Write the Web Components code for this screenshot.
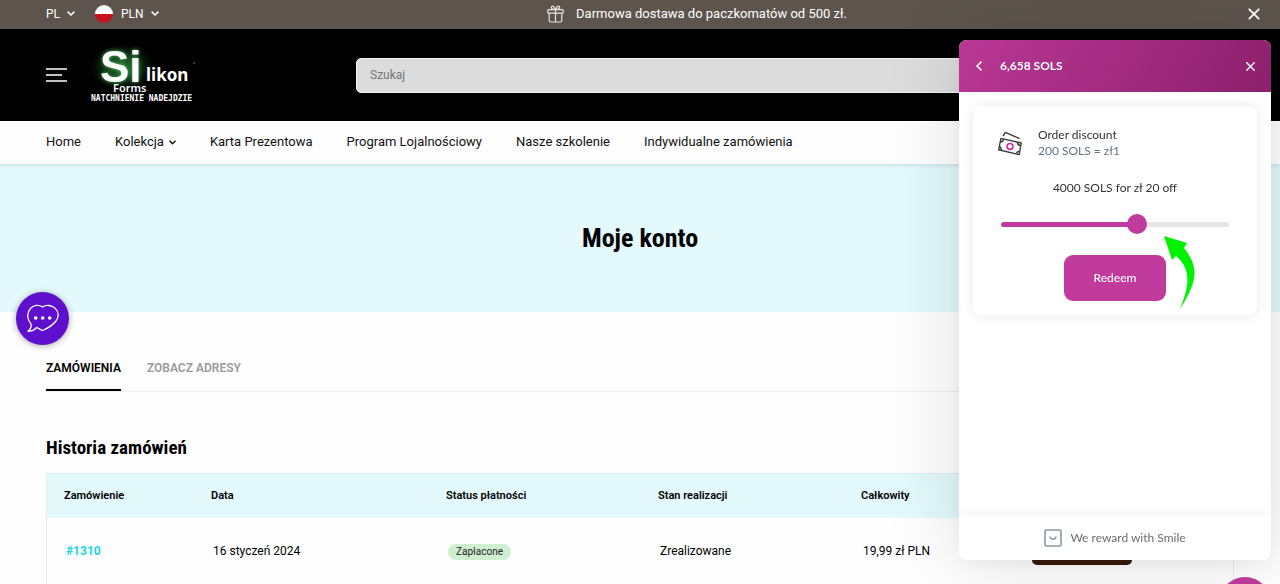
<!DOCTYPE html>
<html lang="pl">
<head>
<meta charset="utf-8">
<meta name="viewport" content="width=device-width, initial-scale=1">
<title>Moje konto – Silikon Forms</title>
<style>
  html { scrollbar-width: none; }
  body {
    margin: 0;
    background: #fefefe;
    color: #000;
    font: 13px/20px Roboto, "Liberation Sans", sans-serif;
    --tint: #e3f9fc;
    --brand: #c13b9c;
    --gutter: 46px;
    --condensed: "Roboto Condensed", "Open Sans Condensed", Roboto, sans-serif;
  }
</style>
</head>
<body>

<shop-page></shop-page>

<template id="t-page">
  <style>
    :host { display: block; }
  </style>
  <announcement-bar>Darmowa dostawa do paczkomatów od 500 zł.</announcement-bar>
  <shop-header></shop-header>
  <shop-nav></shop-nav>
  <page-hero>Moje konto</page-hero>
  <account-tabs></account-tabs>
  <order-history></order-history>
  <chat-button></chat-button>
  <reward-launcher></reward-launcher>
  <reward-panel></reward-panel>
</template>

<template id="t-announcement">
  <style>
    :host {
      display: grid;
      grid-template-columns: 1fr auto 1fr;
      align-items: center;
      height: 29px;
      padding: 0 20px 2px var(--gutter);
      background: #5c544d;
      color: #fff;
      box-sizing: border-box;
      font-size: 12px;
    }
    .left { display: flex; gap: 20px; }
    .msg { display: flex; align-items: center; gap: 12px; margin-left: 88px; font-size: 13px; }
    button {
      display: flex; align-items: center; gap: 7px;
      border: 0; padding: 0; background: none; color: inherit; font: inherit; cursor: pointer;
    }
    .close { justify-self: end; }
    .flag { width: 18px; height: 18px; margin-right: 1px; border-radius: 50%; background: linear-gradient(#fff 50%, #c4161c 50%); }
  </style>
  <div class="left">
    <button>PL <svg width="8" height="5" viewBox="0 0 8 5" fill="none" stroke="#fff" stroke-width="1.5"><path d="M.6.6 4 4 7.4.6"/></svg></button>
    <button><span class="flag"></span>PLN <svg width="8" height="5" viewBox="0 0 8 5" fill="none" stroke="#fff" stroke-width="1.5"><path d="M.6.6 4 4 7.4.6"/></svg></button>
  </div>
  <div class="msg">
    <svg width="17" height="18" viewBox="0 0 17 18" fill="none" stroke="#e4e1de" stroke-width="1.2" stroke-linejoin="round">
      <rect x=".8" y="4.6" width="15.4" height="3.6" rx=".8"/>
      <path d="M2.2 8.2v7.4q0 1.4 1.4 1.4h9.8q1.4 0 1.4-1.4V8.2M8.500 4.600V17M8.500 4.400C7 .2 3.600.4 4.600 3.200q.4 1 3.900 1.200ZM8.500 4.400c1.500-4.200 4.900-4 3.900-1.200q-.4 1-3.900 1.200Z"/>
    </svg>
    <slot></slot>
  </div>
  <button class="close" aria-label="Zamknij"><svg width="12" height="12" viewBox="0 0 12 12" stroke="#fff" stroke-width="1.8" stroke-linecap="round"><path d="m1.300 1.300 9.400 9.400M10.700 1.300l-9.400 9.400"/></svg></button>
</template>

<template id="t-header">
  <style>
    :host {
      display: flex; align-items: center;
      height: 92px; box-sizing: border-box;
      padding: 0 140px 0 var(--gutter);
      background: #000;
    }
    button { border: 0; padding: 0; background: none; display: flex; cursor: pointer; }
    a { display: block; margin: 0 158px 0 19px; }
    svg { display: block; }
    label { flex: 1; display: flex; }
    input {
      flex: 1; min-width: 0; height: 35px; box-sizing: border-box;
      border: 1px solid #f2f2f2; border-radius: 5px;
      padding: 0 13px; background: #dcdcdc; color: #333;
      font: 12px/20px Roboto, sans-serif;
    }
    input::placeholder { color: #757575; opacity: 1; }
  </style>
  <button aria-label="Menu"><svg width="21" height="14" viewBox="0 0 21 14" stroke="#fff" stroke-width="1.300"><path d="M0 1h21M0 7h16M0 13h21"/></svg></button>
  <a href="#" aria-label="Silikon Forms">
    <svg width="112" height="80" viewBox="0 -10 112 80">
      <defs>
        <radialGradient id="halo"><stop offset="0" stop-color="#2c7a35"/><stop offset=".5" stop-color="#123a17" stop-opacity=".8"/><stop offset="1" stop-color="#000" stop-opacity="0"/></radialGradient>
        <filter id="glow" x="-30%" y="-30%" width="160%" height="160%"><feDropShadow dx="0" dy="0" stdDeviation="2" flood-color="#3fbf52"/></filter>
      </defs>
      <ellipse cx="36" cy="22" rx="36" ry="26" fill="url(#halo)"/>
      <text x="14" y="37" fill="#fff" font-family="'Liberation Sans', sans-serif" font-weight="700" font-size="44" filter="url(#glow)">Si</text>
      <g font-family="'Noto Sans', sans-serif" fill="#fff">
        <text x="60" y="36" font-weight="700" font-size="17">likon</text>
        <text x="27" y="47" font-weight="600" font-size="11">Forms</text>
      </g>
      <text x="5" y="56" fill="#fff" font-family="'DejaVu Sans Mono', monospace" font-weight="700" font-size="8">NATCHNIENIE NADEJDZIE</text>
      <path d="m107 19 2-2" stroke="#666"/>
    </svg>
  </a>
  <label><input type="search" placeholder="Szukaj" aria-label="Szukaj"></label>
</template>

<template id="t-nav">
  <style>
    :host {
      display: block; position: relative;
      background: #fefefe;
      box-shadow: 0 1px 4px rgba(0, 60, 70, .14);
    }
    nav { display: flex; gap: 34px; padding: 11px var(--gutter) 12px; }
    a { color: #111; text-decoration: none; display: flex; align-items: center; gap: 5px; white-space: nowrap; }
  </style>
  <nav>
    <a href="#">Home</a>
    <a href="#">Kolekcja <svg width="7" height="5" viewBox="0 0 7 5" fill="none" stroke="#111" stroke-width="1.400"><path d="m.5.8 3 3 3-3"/></svg></a>
    <a href="#">Karta Prezentowa</a>
    <a href="#">Program Lojalnościowy</a>
    <a href="#">Nasze szkolenie</a>
    <a href="#">Indywidualne zamówienia</a>
  </nav>
</template>

<template id="t-hero">
  <style>
    :host { display: block; background: var(--tint); padding: 58px 0; text-align: center; }
    h1 { margin: 0; font: 700 26px/32px var(--condensed); }
  </style>
  <h1><slot></slot></h1>
</template>

<template id="t-tabs">
  <style>
    :host { display: block; padding: 46px var(--gutter) 0; }
    div { display: flex; gap: 26px; border-bottom: 1px solid #eee; }
    button {
      border: 0; border-bottom: 2px solid transparent; padding: 0 0 11px;
      background: none; color: #9a9a9a; cursor: pointer;
      font: 600 12px/20px Roboto, sans-serif; text-transform: uppercase;
    }
    button[aria-selected="true"] { color: #000; border-color: #000; }
  </style>
  <div role="tablist">
    <button role="tab" aria-selected="true">Zamówienia</button>
    <button role="tab" aria-selected="false">Zobacz adresy</button>
  </div>
</template>

<template id="t-orders">
  <style>
    :host { display: block; padding: 44px var(--gutter) 0; }
    h2 { margin: 0 0 13px; font: 700 19px/24px var(--condensed); }
    table { width: 100%; table-layout: fixed; border-collapse: separate; border-spacing: 0; border: 1px solid #e2ecee; box-sizing: border-box; }
    th, td { box-sizing: border-box; text-align: left; }
    th { background: var(--tint); height: 44px; padding: 0 0 0 17px; font-size: 11px; font-weight: 600; }
    td { height: 66px; padding: 0 0 0 19px; font-size: 12px; }
    .c1 { width: 147px; } .c2 { width: 235px; } .c3 { width: 212px; } .c4 { width: 203px; } .c5 { width: 169px; }
    a { color: #22d3e6; font-weight: 700; text-decoration: none; }
    .badge { display: inline-block; padding: 0 8px; border-radius: 8px; background: #cff0d0; color: #222; font-size: 10px; line-height: 16px; }
    button { display: block; width: 100px; height: 28px; border: 0; border-radius: 5px; background: #371807; }
  </style>
  <h2>Historia zamówień</h2>
  <table>
    <thead>
      <tr><th class="c1">Zamówienie</th><th class="c2">Data</th><th class="c3">Status płatności</th><th class="c4">Stan realizacji</th><th class="c5">Całkowity</th><th></th></tr>
    </thead>
    <tbody>
      <tr><td><a href="#">#1310</a></td><td>16 styczeń 2024</td><td><span class="badge">Zapłacone</span></td><td>Zrealizowane</td><td>19,99 zł PLN</td><td><button aria-label="Zobacz"></button></td></tr>
    </tbody>
  </table>
</template>

<template id="t-chat">
  <style>
    :host { display: block; position: fixed; left: 16px; top: 50%; z-index: 3; }
    button {
      display: grid; place-items: center; width: 53px; height: 53px; padding: 0;
      border: 0; border-radius: 50%; background: #5f10cc; cursor: pointer;
      box-shadow: 0 1px 6px rgba(0, 0, 0, .35);
    }
  </style>
  <button aria-label="Czat">
    <svg width="33" height="29" viewBox="0 0 33 29" fill="none" stroke="#fff" stroke-width="1.300" stroke-linejoin="round">
      <path d="M16.500 3C13 .6 8 .8 4.600 4.300.6 8.600.8 15 4.800 19.600 5.800 23 4.500 25.500 2 27.300c3.200 0 6.500-1.200 8.600-3.800 2.200 1 4 2.300 5.900 3 5.500-2.400 10.500-5.500 13.500-9.500C33 12.500 32.600 7.600 29.200 4.400 25.500.9 20 .6 16.500 3Z"/>
      <g fill="#fff" stroke="none"><circle cx="9.700" cy="14" r="1.800"/><circle cx="16.700" cy="14" r="1.800"/><circle cx="23.700" cy="14" r="1.800"/></g>
    </svg>
  </button>
</template>

<template id="t-launcher">
  <style>
    :host { display: block; position: fixed; right: 9px; bottom: -45px; z-index: 3; }
    button { display: block; width: 52px; height: 52px; border: 0; border-radius: 50%; background: var(--brand); }
  </style>
  <button aria-label="SOLS"></button>
</template>

<template id="t-panel">
  <style>
    :host {
      display: flex; flex-direction: column;
      position: fixed; top: 40px; right: 9px; bottom: 24px; width: 312px; z-index: 4;
      background: #fff; border-radius: 8px; overflow: hidden;
      box-shadow: 0 0 80px rgba(0, 0, 0, .12), 0 4px 20px rgba(0, 0, 0, .05);
      font-family: Lato, sans-serif;
    }
    header {
      display: flex; align-items: center; gap: 17px; height: 52px; padding: 0 16px;
      background: linear-gradient(120deg, #ba3795, #8c206c); color: #fff;
      font-size: 12px; font-weight: 700; line-height: 20px;
    }
    header button { display: flex; border: 0; padding: 0; background: none; cursor: pointer; }
    header span { flex: 1; }
    main { flex: 1; padding: 14px; }
    footer {
      display: flex; align-items: center; justify-content: center; gap: 8px; height: 45px;
      box-shadow: 0 -2px 8px rgba(0, 0, 0, .05); color: #6c6c6c; font-size: 12px;
    }
  </style>
  <header>
    <button aria-label="Wstecz"><svg width="8" height="10" viewBox="0 0 8 10" fill="none" stroke="#fff" stroke-width="1.500"><path d="M6.500.6 2 5l4.500 4.400"/></svg></button>
    <span>6,658 SOLS</span>
    <button aria-label="Zamknij"><svg width="9" height="9" viewBox="0 0 9 9" stroke="#fff" stroke-width="1.400"><path d="m.4.4 8.200 8.200M8.600.4.4 8.600"/></svg></button>
  </header>
  <main><discount-card></discount-card></main>
  <footer>
    <svg width="18" height="18" viewBox="0 0 18 18" fill="none" stroke="#8996a3" stroke-width="1.600"><rect x="1" y="1" width="16" height="16" rx="1.500"/><path d="M6 7.500c.4 3.600 5.600 3.600 6 0"/></svg>
    We reward with Smile
  </footer>
</template>

<template id="t-card">
  <style>
    :host {
      display: flex; flex-direction: column; align-items: center; position: relative;
      padding: 21px 28px 14px; border-radius: 8px; background: #fff;
      box-shadow: 0 0 12px rgba(0, 0, 0, .09); color: #333; font-size: 12px; line-height: 16px;
    }
    .head { align-self: stretch; display: flex; align-items: center; gap: 15px; margin-left: -4px; }
    .head p { margin: 0; }
    .rate { color: #637584; }
    label { margin: 20px 0 17px; line-height: 18px; }
    input {
      appearance: none; width: 100%; height: 20px; margin: 0; background: none;
      --track: linear-gradient(to right, var(--brand) 60%, #e5e5e5 60%);
    }
    input::-webkit-slider-runnable-track { height: 5px; border-radius: 3px; background: var(--track); }
    input::-webkit-slider-thumb { appearance: none; width: 20px; height: 20px; margin-top: -8px; border-radius: 50%; background: var(--brand); }
    button {
      margin-top: 21px; width: 102px; height: 46px; border: 0; border-radius: 9px;
      background: var(--brand); color: #fff; font: 500 12px/20px Lato, sans-serif; cursor: pointer;
    }
    .arrow { position: absolute; left: 191px; top: 130px; }
  </style>
  <div class="head">
    <svg width="26" height="26" viewBox="0 0 26 26" fill="none" stroke="#3d3d3d" stroke-width="1.400" stroke-linejoin="round">
      <path d="M4 8.400 24.200 13 22.200 24.600 1.600 19.800Z"/>
      <path d="M6 6 8.400 2.400 22.600 8.600M3.600 12q2.300 0 3-2.700M2.200 16.800q2.400.6 2 3.300M20.400 12.600q.2 2.600 3.200 3M22.800 21.600q-2.700-.4-3.400 1.900"/>
      <circle cx="13" cy="16.400" r="2.900" stroke="#c92fae" stroke-width="1.700"/>
    </svg>
    <div><p>Order discount</p><p class="rate">200 SOLS = zł1</p></div>
  </div>
  <label for="amount">4000 SOLS for zł 20 off</label>
  <input id="amount" type="range" min="0" max="6600" step="200" value="4000">
  <button>Redeem</button>
  <svg class="arrow" width="31" height="74" viewBox="0 0 31 74" fill="#00f200"><path d="M0 0 23 7 20 12C36 32 33 46 16 73 26 48 27 33 12 20L8 24Z"/></svg>
</template>

<script>
  const parts = {
    'announcement-bar': 't-announcement',
    'shop-header': 't-header',
    'shop-nav': 't-nav',
    'page-hero': 't-hero',
    'account-tabs': 't-tabs',
    'order-history': 't-orders',
    'chat-button': 't-chat',
    'reward-launcher': 't-launcher',
    'discount-card': 't-card',
    'reward-panel': 't-panel',
    'shop-page': 't-page'
  };
  for (const [name, id] of Object.entries(parts)) {
    customElements.define(name, class extends HTMLElement {
      constructor() {
        super();
        this.attachShadow({ mode: 'open' })
          .append(document.getElementById(id).content.cloneNode(true));
      }
    });
  }
</script>
</body>
</html>
